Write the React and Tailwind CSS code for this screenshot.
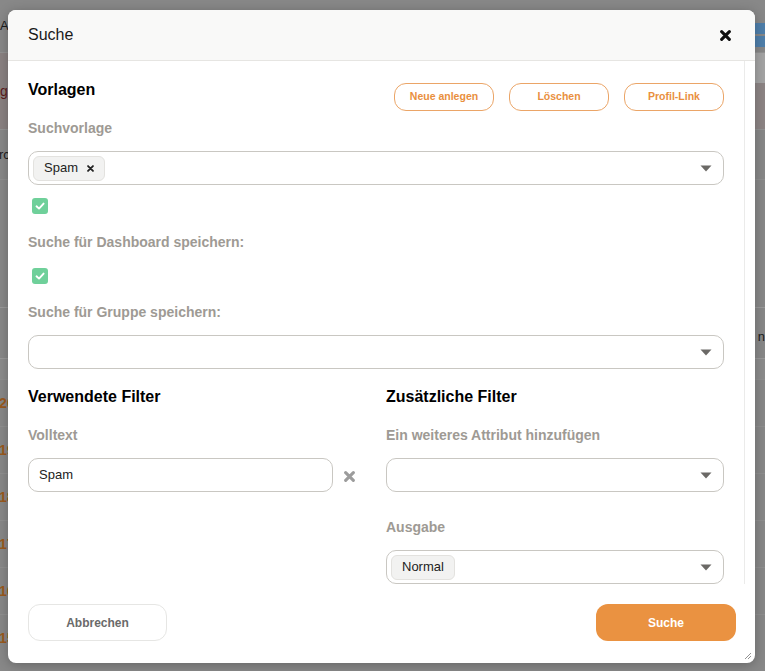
import React from 'react';

// --- small drawings ---

const XMark = ({ size = 10, color = '#111', weight = 2.6 }) => (
  <svg width={size} height={size} viewBox="0 0 10 10" fill="none">
    <path d="M1.5 1.5L8.5 8.5M8.5 1.5L1.5 8.5" stroke={color} strokeWidth={weight} strokeLinecap="round" />
  </svg>
);

const Caret = () => (
  <svg width="12" height="7" viewBox="0 0 12 7">
    <path d="M0.5 0.5H11.5L6 6.5Z" fill="#6b6966" />
  </svg>
);

const Check = () => (
  <div className="w-4 h-4 rounded-[3px] bg-[#6fd09a] flex items-center justify-center">
    <svg width="12" height="12" viewBox="0 0 12 12" fill="none">
      <path d="M2.5 6.3L5 8.6L9.6 3.6" stroke="white" strokeWidth="1.9" strokeLinecap="round" strokeLinejoin="round" />
    </svg>
  </div>
);

const Chip = ({ label, removable }) => (
  <div className="h-[25px] px-[10px] flex items-center gap-[9px] rounded-md bg-[#f2f2f1] border border-[#e3e2df] text-[13px] text-[#222]">
    <span>{label}</span>
    {removable && <XMark size={7} color="#222" weight={2.6} />}
  </div>
);

const Select = ({ children }) => (
  <div className="h-[34px] w-full rounded-[10px] border border-[#c9c7c2] bg-white flex items-center pl-1 pr-[11px]">
    <div className="flex-1 flex items-center">{children}</div>
    <Caret />
  </div>
);

const Label = ({ children, className = '' }) => (
  <div className={`text-[14px] leading-5 font-bold text-[#9e9a94] ${className}`}>{children}</div>
);

const Heading = ({ children, className = '' }) => (
  <h3 className={`text-[16px] leading-6 font-bold text-black ${className}`}>{children}</h3>
);

const OutlineButton = ({ children }) => (
  <button className="w-[100px] h-[28px] rounded-xl border border-[#eba567] text-[10.5px] font-bold text-[#e98f3e] bg-white">
    {children}
  </button>
);

// --- dimmed page behind the dialog ---

function BackgroundPage() {
  const rows = ['20', '19', '18', '17', '16', '15'];
  return (
    <div className="h-[671px] w-full bg-[#888888] overflow-hidden flex flex-col">
      <div className="h-[53px] border-b border-[#929292] flex items-center justify-between">
        <span className="text-[13px] text-[#1c1c1c]">A</span>
        <div className="w-[10px] flex flex-col gap-[2px] mt-[17px]">
          <div className="h-[11px] bg-[#4f7fab]" />
          <div className="h-[11px] bg-[#4f7fab]" />
        </div>
      </div>
      <div className="h-[76px] bg-[#8a8282] flex items-center justify-between">
        <span className="text-[14px] text-[#5c1a1a]">g</span>
        <div className="w-[10px] h-[76px] flex flex-col">
          <div className="h-[30px] bg-[#a4a4a4]" />
          <div className="flex-1 bg-[#8d8585]" />
        </div>
      </div>
      <div className="h-[50px] border-t border-[#939393] flex items-center">
        <span className="text-[13px] text-[#1c1c1c] ml-[-1px]">rc</span>
      </div>
      <div className="h-[128px] border-t border-[#8f8f8f]" />
      <div className="h-[52px] border-t border-[#9a9a9a] border-b flex items-center justify-end">
        <span className="text-[13px] text-[#1c1c1c] pt-[8px]">n</span>
      </div>
      <div className="h-[20px] bg-[#8c8c8c]" />
      {rows.map(r => (
        <div key={r} className="h-[47px] border-t border-[#8f8f8f] flex items-center">
          <span className="text-[14px] font-bold text-[#9a5a1e] ml-[-1px]">{r}</span>
        </div>
      ))}
    </div>
  );
}

export default function App() {
  return (
    <div className="relative w-[765px] h-[671px] overflow-hidden font-['Liberation_Sans',Arial,sans-serif]">
      <BackgroundPage />

      {/* Dialog */}
      <div className="absolute left-[8px] top-[10px] w-[747px] h-[653px] bg-white rounded-lg shadow-[0_2px_12px_rgba(0,0,0,0.25)] flex flex-col overflow-hidden">
        {/* Header */}
        <div className="h-[51px] shrink-0 bg-[#f9f9f8] border-b border-[#e6e5e2] flex items-center justify-between pl-5 pr-[24px]">
          <h2 className="text-[16px] text-[#1a1a1a]">Suche</h2>
          <XMark size={11} color="#111" weight={2.8} />
        </div>

        {/* Body */}
        <div className="h-[523px] shrink-0 flex overflow-hidden">
          <div className="flex-1 px-5 pt-[17px]">
            <div className="flex items-start justify-between">
              <Heading>Vorlagen</Heading>
              <div className="flex gap-[15px] mt-[5px]">
                <OutlineButton>Neue anlegen</OutlineButton>
                <OutlineButton>Löschen</OutlineButton>
                <OutlineButton>Profil-Link</OutlineButton>
              </div>
            </div>

            <Label className="mt-[7px]">Suchvorlage</Label>
            <div className="mt-[13px]">
              <Select>
                <Chip label="Spam" removable />
              </Select>
            </div>

            <div className="mt-[13px] pl-1"><Check /></div>
            <Label className="mt-[18px]">Suche für Dashboard speichern:</Label>
            <div className="mt-[16px] pl-1"><Check /></div>
            <Label className="mt-[18px]">Suche für Gruppe speichern:</Label>
            <div className="mt-[13px]">
              <Select />
            </div>

            <div className="grid grid-cols-2 gap-5 mt-[16px]">
              <div>
                <Heading>Verwendete Filter</Heading>
                <Label className="mt-[16px]">Volltext</Label>
                <div className="mt-[13px] flex items-center">
                  <div className="flex-1 h-[34px] rounded-[10px] border border-[#c9c7c2] flex items-center px-[10px] text-[13px] text-[#222]">
                    Spam
                  </div>
                  <div className="w-[33px] flex justify-center pt-[3px]">
                    <XMark size={11} color="#9c9c9c" weight={2.8} />
                  </div>
                </div>
              </div>
              <div>
                <Heading>Zusätzliche Filter</Heading>
                <Label className="mt-[16px]">Ein weiteres Attribut hinzufügen</Label>
                <div className="mt-[13px]">
                  <Select />
                </div>
                <Label className="mt-[25px]">Ausgabe</Label>
                <div className="mt-[13px]">
                  <Select>
                    <Chip label="Normal" />
                  </Select>
                </div>
              </div>
            </div>
          </div>
          <div className="w-[11px] shrink-0 border-l border-[#ebebea]" />
        </div>

        {/* Footer */}
        <div className="flex-1 flex items-start justify-between pl-5 pr-[19px] pt-[20px]">
          <button className="w-[139px] h-[37px] rounded-xl border border-[#e6e6e4] bg-white text-[12px] font-bold text-[#6a6a6a]">
            Abbrechen
          </button>
          <button className="w-[140px] h-[37px] rounded-xl bg-[#ea9241] text-[12px] font-bold text-white">
            Suche
          </button>
        </div>

        {/* resize grip */}
        <svg className="absolute right-[3px] bottom-[3px]" width="8" height="8" viewBox="0 0 8 8">
          <path d="M1 7L7 1M4 7L7 4" stroke="#777" strokeWidth="0.8" />
        </svg>
      </div>
    </div>
  );
}
